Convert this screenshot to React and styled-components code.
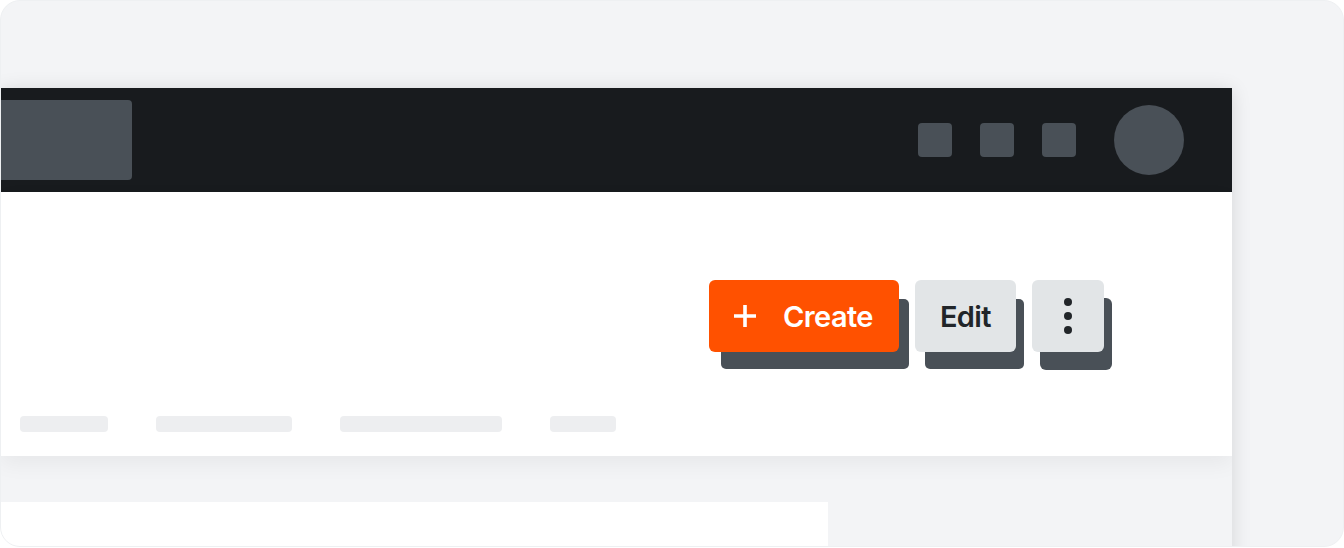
import React from 'react'
import styled, { createGlobalStyle } from 'styled-components'

const Global = createGlobalStyle`
    * { box-sizing: border-box; }
    html, body { margin: 0; background: #ffffff; }
    body { font-family: Inter, "Noto Sans", sans-serif; }
`

function App() {
    return (
        <>
            <Global />
            <Frame>
                <Window>
                    <TopBar>
                        <Logo />
                        <Actions>
                            <IconSlot />
                            <IconSlot />
                            <IconSlot />
                            <Avatar />
                        </Actions>
                    </TopBar>
                    <Header>
                        <ButtonRow>
                            <Button primary shadowX={11} shadowSpread={-1}>
                                <svg width="24" height="24" viewBox="0 0 24 24">
                                    <path d="M12 1v22M1 12h22" stroke="#fff" strokeWidth="3.6" />
                                </svg>
                                <span>Create</span>
                            </Button>
                            <Button shadowX={9} shadowSpread={-1}>Edit</Button>
                            <MoreButton shadowX={8} shadowSpread={0}>
                                <Dot /><Dot /><Dot />
                            </MoreButton>
                        </ButtonRow>
                        <Tabs>
                            <Tab w={88} />
                            <Tab w={136} />
                            <Tab w={162} />
                            <Tab w={66} />
                        </Tabs>
                    </Header>
                    <Body>
                        <Panel />
                    </Body>
                </Window>
            </Frame>
        </>
    )
}

export default App

const Frame = styled.div`
    width: 1344px;
    height: 547px;
    background: #f3f4f6;
    border: 1px solid #eef0f2;
    border-radius: 20px;
    overflow: hidden;
    padding-top: 87px;
`

const Window = styled.div`
    width: 1231px;
    height: 480px;
    background: #f3f4f6;
    box-shadow: 0 2px 18px rgba(0, 0, 0, 0.13);
    display: flex;
    flex-direction: column;
    overflow: hidden;
`

const TopBar = styled.div`
    height: 104px;
    flex-shrink: 0;
    background: #181b1e;
    display: flex;
    align-items: center;
    justify-content: space-between;
    padding-right: 48px;
`

const Logo = styled.div`
    width: 151px;
    height: 80px;
    margin-left: -20px;
    background: #495057;
    border-radius: 4px;
`

const Actions = styled.div`
    display: flex;
    align-items: center;
    gap: 28px;
`

const IconSlot = styled.div`
    width: 34px;
    height: 34px;
    background: #495057;
    border-radius: 4px;
`

const Avatar = styled.div`
    width: 70px;
    height: 70px;
    margin-left: 10px;
    border-radius: 50%;
    background: #495057;
`

const Header = styled.div`
    height: 264px;
    flex-shrink: 0;
    background: #ffffff;
    box-shadow: 0 8px 20px rgba(0, 0, 0, 0.05);
    position: relative;
    z-index: 1;
    display: flex;
    flex-direction: column;
    padding: 88px 128px 24px 19px;
`

const ButtonRow = styled.div`
    display: flex;
    justify-content: flex-end;
    gap: 16px;
`

const Button = styled.div`
    height: 72px;
    padding: ${p => (p.primary ? '0 26px 0 24px' : '0 25px')};
    border-radius: 6px;
    display: flex;
    align-items: center;
    gap: 26px;
    font-size: 29px;
    font-weight: 600;
    letter-spacing: -0.6px;
    background: ${p => (p.primary ? '#ff5100' : '#e2e5e7')};
    color: ${p => (p.primary ? '#ffffff' : '#212529')};
    box-shadow: ${p => `${p.shadowX}px 18px 0 ${p.shadowSpread}px #495057`};
`

const MoreButton = styled(Button)`
    width: 72px;
    padding: 0;
    flex-direction: column;
    justify-content: center;
    gap: 6px;
`

const Dot = styled.div`
    width: 8px;
    height: 8px;
    border-radius: 50%;
    background: #212529;
`

const Tabs = styled.div`
    margin-top: auto;
    display: flex;
    gap: 48px;
`

const Tab = styled.div`
    width: ${p => p.w}px;
    height: 16px;
    border-radius: 4px;
    background: #edeef0;
`

const Body = styled.div`
    flex: 1;
    padding-top: 46px;
`

const Panel = styled.div`
    width: 827px;
    height: 60px;
    background: #ffffff;
`
